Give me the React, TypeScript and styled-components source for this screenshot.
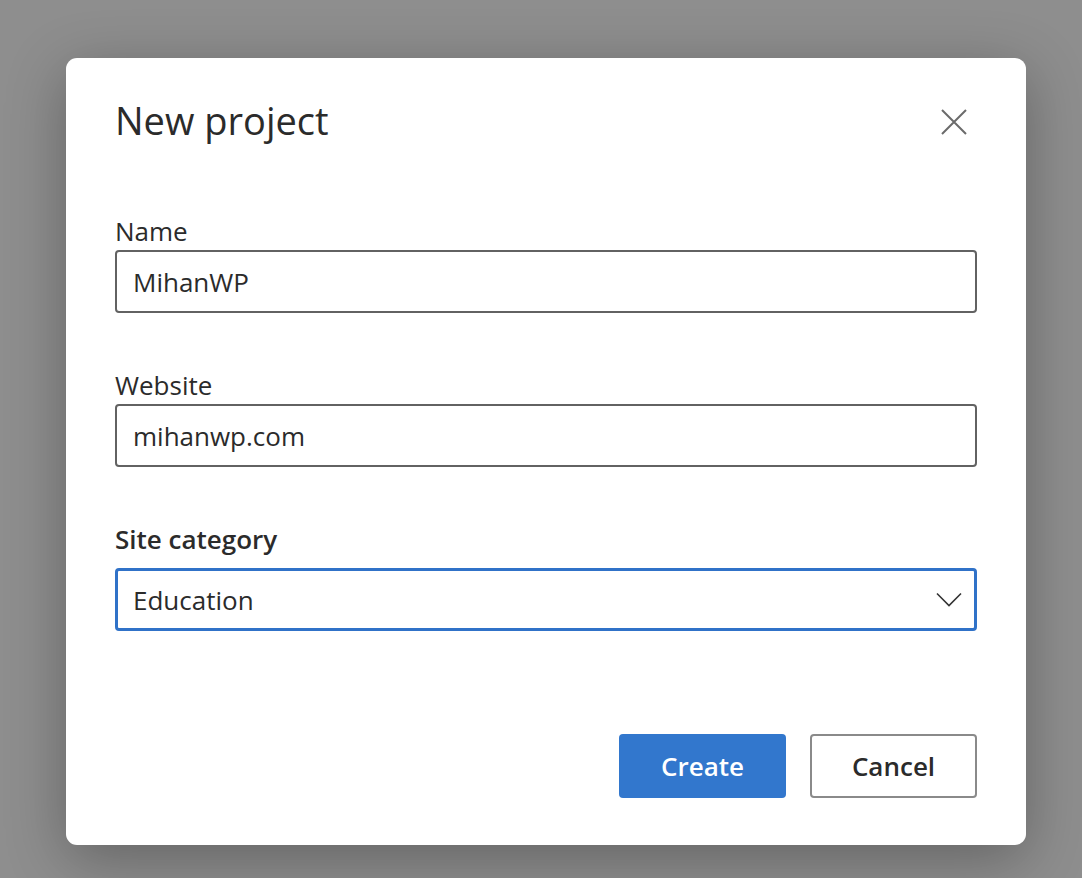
import styled, { createGlobalStyle } from 'styled-components';

const GlobalStyle = createGlobalStyle`
  html, body {
    margin: 0;
    padding: 0;
    background: #8e8e8e;
    font-family: "Open Sans", "Noto Sans", sans-serif;
  }
`;

export default function App() {
  return (
    <Backdrop>
      <GlobalStyle />
      <Dialog>
        <Header>
          <Title>New project</Title>
          <CloseButton aria-label="Close">
            <svg width="26" height="26" viewBox="0 0 26 26">
              <path d="M1 1 L25 25 M25 1 L1 25" stroke="#6b6b6b" strokeWidth="2" fill="none" />
            </svg>
          </CloseButton>
        </Header>

        <Field>
          <Label>Name</Label>
          <Input>MihanWP</Input>
        </Field>

        <Field>
          <Label>Website</Label>
          <Input>mihanwp.com</Input>
        </Field>

        <Field>
          <Label $strong>Site category</Label>
          <Input $focused>
            Education
            <svg width="26" height="16" viewBox="0 0 26 16">
              <path d="M1 1.5 L13 13.5 L25 1.5" stroke="#333" strokeWidth="1.6" fill="none" />
            </svg>
          </Input>
        </Field>

        <Footer>
          <Button $primary>Create</Button>
          <Button>Cancel</Button>
        </Footer>
      </Dialog>
    </Backdrop>
  );
}

const Backdrop = styled.div`
  height: 878px;
  box-sizing: border-box;
  padding: 58px 0 0 66px;
`;

const Dialog = styled.div`
  width: 960px;
  height: 787px;
  box-sizing: border-box;
  background: #fff;
  border-radius: 11px;
  box-shadow: 0 14px 60px rgba(0, 0, 0, 0.3);
  padding: 37px 49px 47px;
  display: flex;
  flex-direction: column;
  color: #2b2b2b;
`;

const Header = styled.div`
  display: flex;
  align-items: center;
  justify-content: space-between;
  margin-bottom: 71px;
`;

const Title = styled.h1`
  margin: 0;
  font-size: 38px;
  font-weight: 400;
  line-height: 50px;
  color: #2b2b2b;
`;

const CloseButton = styled.button`
  border: 0;
  background: none;
  padding: 0;
  margin: 4px 10px 0 0;
  display: flex;
  cursor: pointer;
`;

const Field = styled.div`
  display: flex;
  flex-direction: column;
  margin-bottom: 57px;
`;

const Label = styled.label<{ $strong?: boolean }>`
  font-size: 26px;
  line-height: 30px;
  font-weight: ${(p) => (p.$strong ? 600 : 400)};
  color: #2b2b2b;
  margin-bottom: ${(p) => (p.$strong ? '14px' : '4px')};
`;

const Input = styled.div<{ $focused?: boolean }>`
  height: 63px;
  flex: none;
  box-sizing: border-box;
  border: ${(p) => (p.$focused ? '3px solid #3072c8' : '2px solid #626262')};
  border-radius: 4px;
  padding: ${(p) => (p.$focused ? '0 12px 0 15px' : '0 16px')};
  display: flex;
  align-items: center;
  justify-content: space-between;
  font-size: 26px;
  color: #2b2b2b;
`;

const Footer = styled.div`
  margin-top: auto;
  display: flex;
  justify-content: flex-end;
  gap: 24px;
`;

const Button = styled.button<{ $primary?: boolean }>`
  width: 167px;
  height: 64px;
  box-sizing: border-box;
  border-radius: 4px;
  font-family: "Open Sans", "Noto Sans", sans-serif;
  font-size: 26px;
  font-weight: 600;
  cursor: pointer;
  background: ${(p) => (p.$primary ? '#3277cd' : '#fff')};
  color: ${(p) => (p.$primary ? '#fff' : '#2b2b2b')};
  border: ${(p) => (p.$primary ? '0' : '2px solid #8a8a8a')};
`;
